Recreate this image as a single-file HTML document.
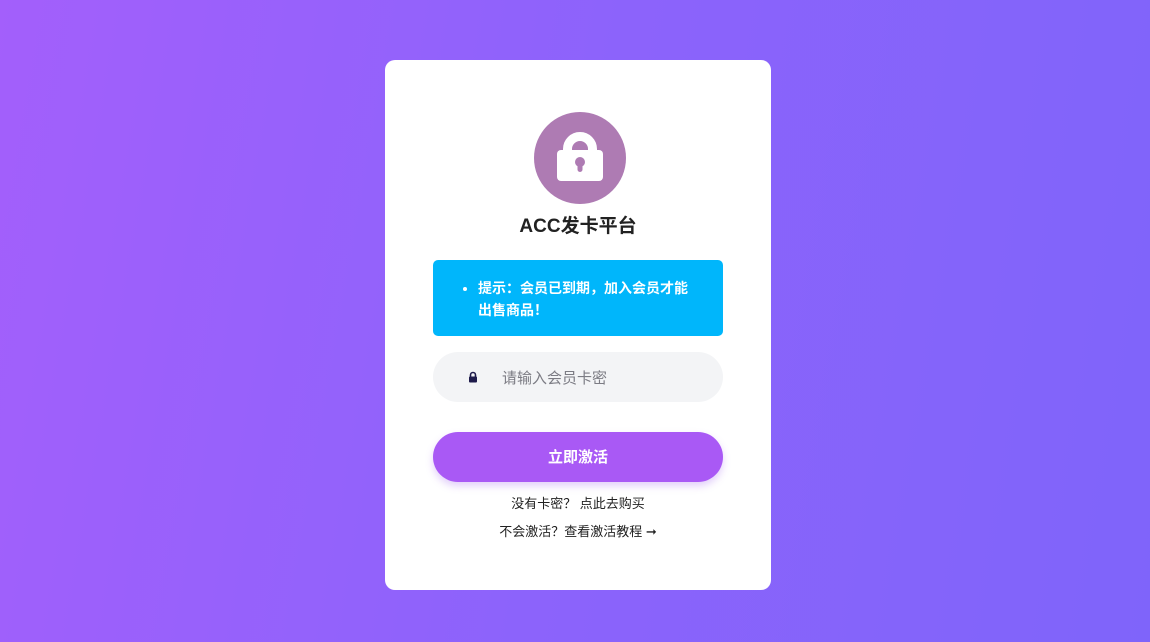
<!DOCTYPE html>
<html><head><meta charset="utf-8"><style>
*{margin:0;padding:0;box-sizing:border-box}
body{width:1150px;height:642px;overflow:hidden;background:linear-gradient(100deg,#a35ffb 0%,#8c63fb 50%,#7f64fa 100%);font-family:"Liberation Sans","Noto Sans CJK SC",sans-serif;position:relative}
.card{position:absolute;left:385px;top:60px;width:386px;height:530px;background:#fff;border-radius:10px}
.logo{position:absolute;left:149px;top:52px;width:92px;height:92px;border-radius:50%;background:#ae7bb3}
.title{position:absolute;left:0;width:386px;top:151px;text-align:center;font-size:19px;font-weight:bold;color:#222}
.tip{position:absolute;left:48px;top:200px;width:290px;height:76px;background:#00b6fb;border-radius:5px;color:#fff;font-size:14px;font-weight:bold;line-height:22px;padding:17px 30px 0 45px}
.inp{position:absolute;left:48px;top:292px;width:290px;height:50px;background:#f3f4f6;border-radius:25px}
.inp span{position:absolute;left:69px;top:15px;font-size:15px;color:#7c7c84}
.btn{position:absolute;left:48px;top:372px;width:290px;height:50px;background:#a959f5;border-radius:25px;color:#fff;font-weight:bold;font-size:15px;text-align:center;line-height:52px;box-shadow:0 4px 8px rgba(160,100,240,.3)}
.l{position:absolute;left:0;width:386px;text-align:center;font-size:13px;color:#222}
</style></head><body>
<div class="card">
<div class="logo"><svg width="92" height="92" viewBox="0 0 92 92"><path d="M33.5 41V37a12.5 12.5 0 0 1 25 0v4" fill="none" stroke="#fff" stroke-width="9"/><rect x="23" y="38" width="46" height="31" rx="4" fill="#fff"/><circle cx="46" cy="50" r="5" fill="#ae7bb3"/><rect x="43.5" y="50" width="5" height="10" rx="2.5" fill="#ae7bb3"/></svg></div>
<div class="title">ACC发卡平台</div>
<div class="tip"><ul><li>提示：会员已到期，加入会员才能出售商品！</li></ul></div>
<div class="inp"><svg style="position:absolute;left:35px;top:19px" width="10" height="12" viewBox="0 0 10 12"><path d="M2.5 6V4a2.5 2.5 0 0 1 5 0v2" fill="none" stroke="#1e1b4b" stroke-width="1.6"/><rect x="1" y="5.5" width="8" height="6" rx="1" fill="#1e1b4b"/></svg><span>请输入会员卡密</span></div>
<div class="btn">立即激活</div>
<div class="l" style="top:433px">没有卡密？ 点此去购买</div>
<div class="l" style="top:461px">不会激活？查看激活教程 ➞</div>
</div>
</body></html>
